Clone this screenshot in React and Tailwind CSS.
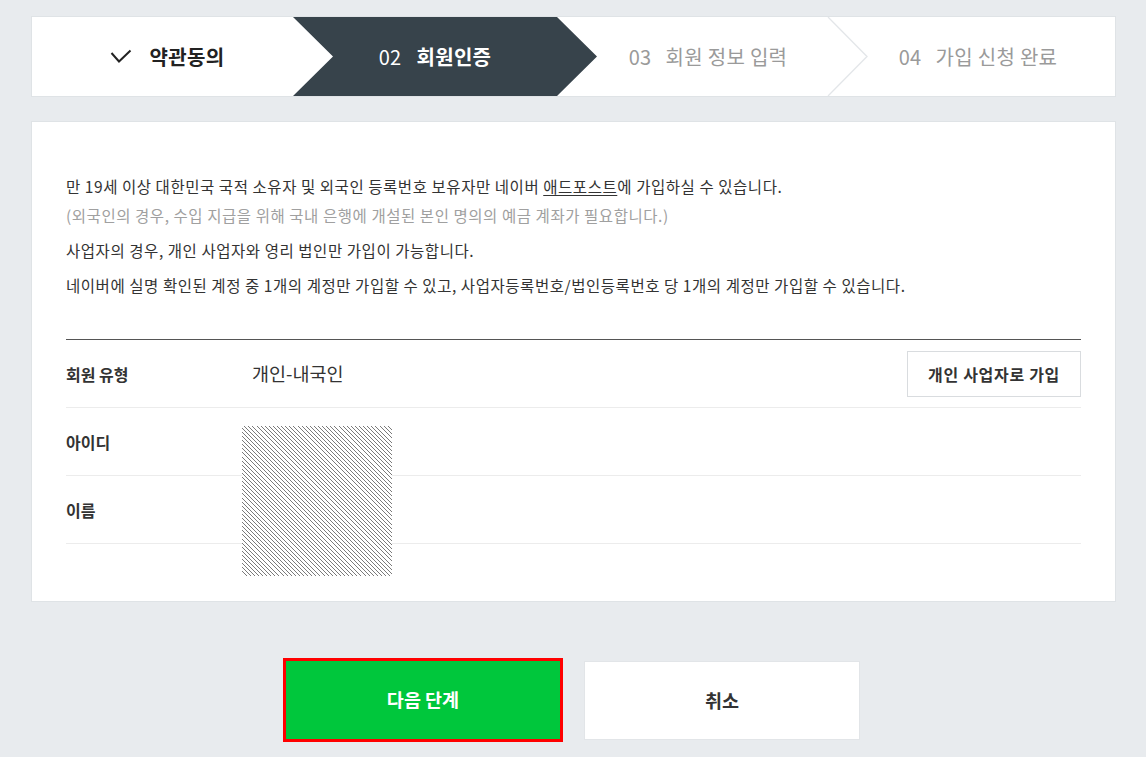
import React from 'react';

const font = { fontFamily: '"Noto Sans CJK KR", "Noto Sans", sans-serif' };

const Steps = () => (
  <div className="relative h-[81px] border border-[#dfe3e6] bg-white">
    <svg className="absolute inset-0" width="1083" height="79" viewBox="0 0 1083 79">
      <polygon points="261,0 525,0 565,39.5 525,79 261,79 301,39.5" fill="#37434b" />
      <polyline points="796,0 835,39.5 796,79" fill="none" stroke="#e3e6e9" strokeWidth="1.3" />
    </svg>
    <div className="relative flex h-full items-center text-[20px] tracking-[0.3px]">
      <div className="flex w-[270px] items-center justify-center font-bold text-[#222]">
        <svg width="22" height="16" viewBox="0 0 22 16" className="mr-[18px]">
          <polyline points="1.5,4 9,12.5 20.5,1.5" fill="none" stroke="#222" strokeWidth="2" />
        </svg>
        약관동의
      </div>
      <div className="flex w-[266px] items-center justify-center text-white">
        <span>02</span>
        <span className="ml-[15px] font-bold">회원인증</span>
      </div>
      <div className="flex w-[280px] items-center justify-center text-[#9a9a9a]">
        <span>03</span>
        <span className="ml-[14px]">회원 정보 입력</span>
      </div>
      <div className="flex w-[260px] items-center justify-center text-[#9a9a9a]">
        <span>04</span>
        <span className="ml-[14px]">가입 신청 완료</span>
      </div>
    </div>
  </div>
);

const Row = ({ label, children, right }) => (
  <div className="flex h-[68px] items-center border-b border-[#ececec]">
    <div className="w-[186px] text-[16px] font-bold text-[#333]">{label}</div>
    <div className="flex-1 text-[18.5px] text-[#333]">{children}</div>
    {right}
  </div>
);

export default function App() {
  return (
    <div className="min-h-[757px] bg-[#e8ebee] pt-[16px] pb-[15px]" style={font}>
      <div className="ml-[31px] w-[1085px]">
        <Steps />

        <div className="mt-[24px] border border-[#dfe3e6] bg-white px-[34px] pt-[50px] pb-[57px]">
          <div className="text-[15.5px] tracking-[0.55px] text-[#333]">
            <p className="leading-[29px]">
              만 19세 이상 대한민국 국적 소유자 및 외국인 등록번호 보유자만 네이버 <span className="underline underline-offset-2">애드포스트</span>에 가입하실 수 있습니다.
            </p>
            <p className="leading-[29px] text-[#a0a0a0]">
              (외국인의 경우, 수입 지급을 위해 국내 은행에 개설된 본인 명의의 예금 계좌가 필요합니다.)
            </p>
            <p className="mt-[3px] leading-[35px]">사업자의 경우, 개인 사업자와 영리 법인만 가입이 가능합니다.</p>
            <p className="leading-[35px]">
              네이버에 실명 확인된 계정 중 1개의 계정만 가입할 수 있고, 사업자등록번호/법인등록번호 당 1개의 계정만 가입할 수 있습니다.
            </p>
          </div>

          <div className="relative mt-[36px] border-t border-[#555]">
            <Row
              label="회원 유형"
              right={
                <button className="h-[46px] w-[174px] border border-[#d9dcdf] bg-white text-[16px] font-bold tracking-[0.7px] text-[#333]">
                  개인 사업자로 가입
                </button>
              }
            >
              개인-내국인
            </Row>
            <Row label="아이디" />
            <Row label="이름" />
            <div className="absolute left-[176px] top-[86px] h-[150px] w-[150px] bg-[image:repeating-linear-gradient(45deg,#7a7a7a_0_0.7px,#fff_0.7px_2.9px)]" />
          </div>
        </div>
      </div>

      <div className="mt-[56px] flex justify-center gap-[21px] pr-[3px]">
        <button className="h-[84px] w-[280px] border-[3px] border-[#ff0000] bg-[#00c73c] text-[18.5px] font-bold text-white">
          다음 단계
        </button>
        <button className="mt-[3px] h-[79px] w-[276px] border border-[#e2e5e8] bg-white text-[18.5px] font-bold text-[#333]">
          취소
        </button>
      </div>
    </div>
  );
}
